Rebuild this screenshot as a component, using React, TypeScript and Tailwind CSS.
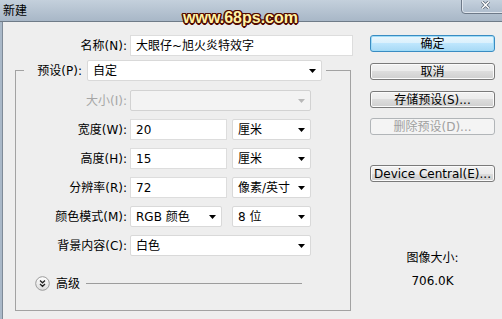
import React from 'react';

const font = "font-['DejaVu_Sans','Noto_Sans_CJK_SC',sans-serif]";

function Arrow({ disabled }: { disabled?: boolean }) {
  return (
    <svg width="7" height="4" viewBox="0 0 7 4" className="ml-auto mr-[5px] shrink-0">
      <path d="M0 0h7L3.5 4z" fill={disabled ? '#b8b8b8' : '#000'} />
    </svg>
  );
}

function Select({ value, className, disabled }: { value?: string; className: string; disabled?: boolean }) {
  return (
    <div
      className={`flex h-[21px] items-center rounded-[2px] border pl-[5px] leading-none ${
        disabled ? 'border-[#d2d2d2] bg-[#f3f3f3]' : 'border-[#d9d9d9] bg-white'
      } ${className}`}
    >
      <span className="whitespace-nowrap">{value}</span>
      <Arrow disabled={disabled} />
    </div>
  );
}

function Field({ value, className }: { value: string; className: string }) {
  return (
    <div className={`flex h-[21px] items-center border border-[#dddddd] bg-white pl-[5px] leading-none ${className}`}>
      {value}
    </div>
  );
}

function Row({ label, disabled, children }: { label: string; disabled?: boolean; children: React.ReactNode }) {
  return (
    <div className="flex h-[21px] items-center">
      <div className={`w-[114px] pr-[3px] text-right leading-none ${disabled ? 'text-[#a6a6a6]' : ''}`}>{label}</div>
      {children}
    </div>
  );
}

function Button({ label, kind = 'normal' }: { label: string; kind?: 'default' | 'normal' | 'disabled' }) {
  const styles = {
    default:
      'border-[#3a8cc2] bg-[linear-gradient(#eaf6fd,#d9f0fc_50%,#bee6fd_50%,#a7d9f5)] shadow-[inset_0_0_0_1px_#9fdcf8]',
    normal:
      'border-[#7a7a7a] bg-[linear-gradient(#f2f2f2,#ebebeb_50%,#dddddd_50%,#cfcfcf)] shadow-[inset_0_0_0_1px_#fbfbfb]',
    disabled: 'border-[#b1b5b8] bg-[#f4f4f4] text-[#a0a0a0]',
  };
  return (
    <div
      className={`flex h-[17px] w-[125px] items-center justify-center rounded-[3px] border leading-none ${styles[kind]}`}
    >
      {label}
    </div>
  );
}

function AdvancedIcon() {
  return (
    <svg width="15" height="15" viewBox="0 0 15 15" className="shrink-0">
      <defs>
        <linearGradient id="adv" x1="0" y1="0" x2="0" y2="1">
          <stop offset="0" stopColor="#ffffff" />
          <stop offset="1" stopColor="#dcdcdc" />
        </linearGradient>
      </defs>
      <circle cx="7.5" cy="7.5" r="6.8" fill="url(#adv)" stroke="#9a9a9a" />
      <path d="M5 4.5l2.5 2.3L10 4.5M5 8l2.5 2.3L10 8" fill="none" stroke="#222" strokeWidth="1.3" />
    </svg>
  );
}

export default function App() {
  return (
    <div className={`relative h-[319px] w-[502px] overflow-hidden bg-[#a9b8c8] text-[12px] text-black ${font}`}>
      <div className="flex h-[22px] items-center border-b border-[#6f7b88] bg-linear-to-b from-[#c4d0dc] to-[#a8b7c7] pl-[3px]">
        <span className="leading-none">新建</span>
      </div>

      {/* close button */}
      <div className="absolute right-[-8px] top-[-5px] flex h-[19px] w-[49px] items-end justify-center rounded-b-[4px] border border-[#6d7988] bg-linear-to-b from-[#ccd7e2] to-[#aebdcd] pb-[4px] shadow-[inset_0_0_0_1px_#dfe6ee]">
        <svg width="9" height="8" viewBox="0 0 9 8">
          <path d="M1 0.5l7 7M8 0.5l-7 7" stroke="#566372" strokeWidth="3" />
          <path d="M1 0.5l7 7M8 0.5l-7 7" stroke="#ffffff" strokeWidth="1.5" />
        </svg>
      </div>

      {/* watermark */}
      <div className="absolute left-[183px] top-[10px] font-['Liberation_Sans',sans-serif] text-[16px] font-bold leading-[16px] text-[#fff3a6] [text-shadow:1.5px_0_0_#520a00,-1.5px_0_0_#520a00,0_1.5px_0_#520a00,0_-1.5px_0_#520a00,1px_1px_0_#520a00,-1px_-1px_0_#520a00,1px_-1px_0_#520a00,-1px_1px_0_#520a00]">
        www.68ps.com
      </div>

      <div className="flex h-[297px] pl-[2px]">
        <div className="flex flex-1 border-l border-[#7e8a97] bg-[#eeeeee]">
          {/* left column */}
          <div className="flex w-[350px] flex-col">
            <div className="mt-[13px] flex h-[21px] items-center">
              <div className="w-[127px] pr-[3px] text-right leading-none">名称(N):</div>
              <Field value="大眼仔~旭火炎特效字" className="w-[223px]" />
            </div>

            <fieldset className="ml-[12px] mt-[4px] w-[336px] border border-[#a2a2a2]">
              <legend className="ml-[8px] pr-[4px]">
                <div className="flex h-[21px] items-center">
                  <div className="w-[63px] pr-[5px] text-right leading-none">预设(P):</div>
                  <Select value="自定" className="w-[235px]" />
                </div>
              </legend>
              <div className="flex flex-col pb-[19px] pt-[9px]">
                <div className="flex flex-col gap-[8px]">
                  <Row label="大小(I):" disabled>
                    <Select className="w-[181px]" disabled />
                  </Row>
                  <Row label="宽度(W):">
                    <Field value="20" className="w-[97px]" />
                    <Select value="厘米" className="ml-[5px] w-[79px]" />
                  </Row>
                  <Row label="高度(H):">
                    <Field value="15" className="w-[97px]" />
                    <Select value="厘米" className="ml-[5px] w-[79px]" />
                  </Row>
                  <Row label="分辨率(R):">
                    <Field value="72" className="w-[97px]" />
                    <Select value="像素/英寸" className="ml-[5px] w-[79px]" />
                  </Row>
                  <Row label="颜色模式(M):">
                    <Select value="RGB 颜色" className="w-[92px]" />
                    <Select value="8 位" className="ml-[10px] w-[79px]" />
                  </Row>
                  <Row label="背景内容(C):">
                    <Select value="白色" className="w-[181px]" />
                  </Row>
                </div>
                <div className="mt-[20px] flex h-[15px] items-center pl-[19px]">
                  <AdvancedIcon />
                  <span className="ml-[6px] leading-none">高级</span>
                  <div className="ml-[6px] h-px w-[216px] bg-[#9c9c9c]" />
                </div>
              </div>
            </fieldset>
          </div>

          {/* right column */}
          <div className="ml-[17px] flex w-[125px] flex-col">
            <div className="mt-[13px]">
              <Button label="确定" kind="default" />
            </div>
            <div className="mt-[11px]">
              <Button label="取消" />
            </div>
            <div className="mt-[11px]">
              <Button label="存储预设(S)..." />
            </div>
            <div className="mt-[10px]">
              <Button label="删除预设(D)..." kind="disabled" />
            </div>
            <div className="mt-[30px]">
              <Button label="Device Central(E)..." />
            </div>
            <div className="mt-[69px] text-center leading-[15px]">图像大小:</div>
            <div className="mt-[8px] text-center leading-[15px]">706.0K</div>
          </div>
        </div>
      </div>
    </div>
  );
}
